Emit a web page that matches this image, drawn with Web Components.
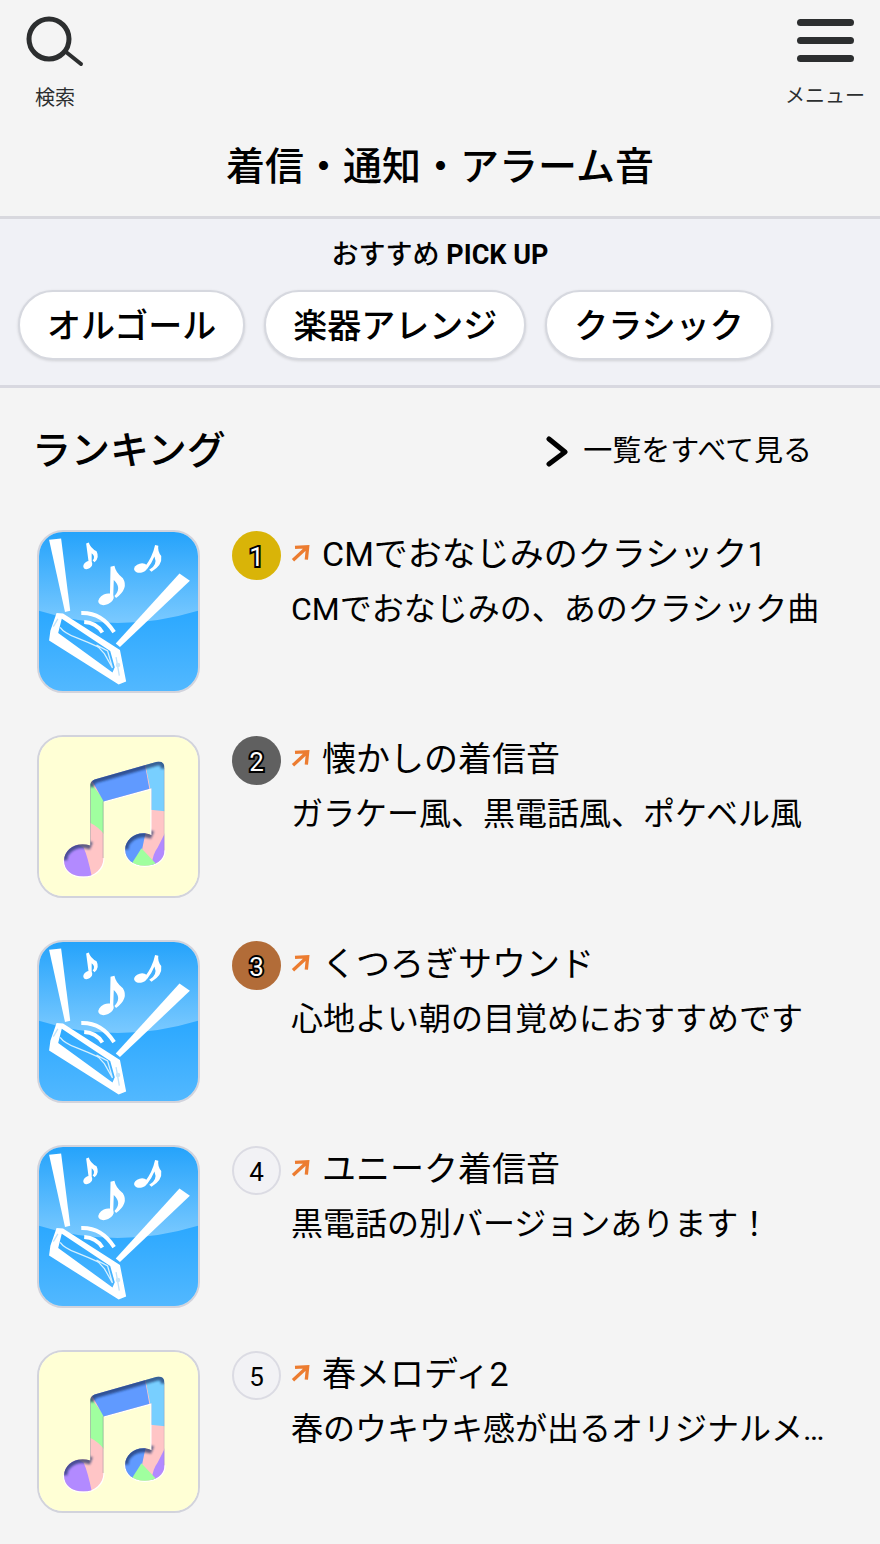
<!DOCTYPE html>
<html lang="ja">
<head>
<meta charset="utf-8">
<meta name="viewport" content="width=device-width, initial-scale=1">
<title>着信・通知・アラーム音</title>
<style>
  body {
    margin: 0;
    background: #f4f4f4;
    color: #000;
    font-family: Roboto, "Noto Sans CJK JP", sans-serif;
  }
</style>
</head>
<body>
<sound-page>
  <site-header>着信・通知・アラーム音</site-header>
  <pick-up>
    <span slot="heading">おすすめ <b>PICK UP</b></span>
    <pick-chip>オルゴール</pick-chip>
    <pick-chip>楽器アレンジ</pick-chip>
    <pick-chip>クラシック</pick-chip>
  </pick-up>
  <ranking-list>
    <span slot="heading">ランキング</span>
    <span slot="more">一覧をすべて見る</span>
    <rank-item rank="1" art="phone"><span slot="name">CMでおなじみのクラシック1</span>CMでおなじみの、あのクラシック曲</rank-item>
    <rank-item rank="2" art="note"><span slot="name">懐かしの着信音</span>ガラケー風、黒電話風、ポケベル風</rank-item>
    <rank-item rank="3" art="phone"><span slot="name">くつろぎサウンド</span>心地よい朝の目覚めにおすすめです</rank-item>
    <rank-item rank="4" art="phone"><span slot="name">ユニーク着信音</span>黒電話の別バージョンあります！</rank-item>
    <rank-item rank="5" art="note"><span slot="name">春メロディ2</span>春のウキウキ感が出るオリジナルメ…</rank-item>
  </ranking-list>
</sound-page>

<script>
const define = (name, html, setup) => {
  const template = document.createElement('template');
  template.innerHTML = html;
  customElements.define(name, class extends HTMLElement {
    constructor() {
      super();
      this.attachShadow({ mode: 'open' }).append(template.content.cloneNode(true));
    }
    connectedCallback() {
      if (setup) setup(this, this.shadowRoot);
    }
  });
};

define('sound-page', `
  <style>:host { display: block; }</style>
  <main><slot></slot></main>
`);

define('site-header', `
  <style>
    :host { display: block; border-bottom: 3px solid #d8d8de; }
    nav { display: flex; justify-content: space-between; padding: 16px 15px 0; }
    button {
      display: flex; flex-direction: column; align-items: center; gap: 16px;
      width: 80px; padding: 0; border: 0; background: none;
      color: #2c2e2f; font: 20px/24px Roboto, "Noto Sans CJK JP", sans-serif;
      white-space: nowrap; cursor: pointer;
    }
    svg { display: block; }
    h1 { margin: 0; padding: 28px 0 20px; text-align: center; font-size: 39px; line-height: 58px; font-weight: 500; }
  </style>
  <nav>
    <button type="button">
      <svg width="60" height="54" viewBox="0 0 60 54" fill="none" stroke="#2c2e2f">
        <circle cx="24" cy="23" r="20" stroke-width="5"/>
        <path d="M41 36L56 48" stroke-width="4" stroke-linecap="round"/>
      </svg>
      検索
    </button>
    <button type="button">
      <svg width="58" height="52" viewBox="0 0 58 52" fill="#2c2e2f">
        <rect x="1" y="3" width="57" height="7" rx="3.5"/>
        <rect x="1" y="21" width="57" height="7" rx="3.5"/>
        <rect x="1" y="39" width="57" height="7" rx="3.5"/>
      </svg>
      メニュー
    </button>
  </nav>
  <h1><slot></slot></h1>
`);

define('pick-up', `
  <style>
    :host { display: block; background: #f0f1f6; border-bottom: 3px solid #d8d8e0; padding: 16px 18px 25px; }
    h2 { margin: 0 0 15px; text-align: center; font-size: 27px; line-height: 40px; font-weight: 500; }
    .chips { display: flex; gap: 19px; }
  </style>
  <h2><slot name="heading"></slot></h2>
  <div class="chips"><slot></slot></div>
`);

define('pick-chip', `
  <style>
    :host { display: block; flex: none; }
    a {
      display: block; box-sizing: border-box; height: 70px; padding: 0 27px;
      border: 2px solid #d6d8df; border-radius: 35px; background: #fff;
      box-shadow: 0 1px 3px #0002;
      color: #000; font-size: 34px; line-height: 68px; font-weight: 500;
      text-decoration: none; white-space: nowrap;
    }
  </style>
  <a href="#"><slot></slot></a>
`);

define('ranking-list', `
  <style>
    :host { display: block; padding: 33px 37px; }
    header { display: flex; justify-content: space-between; align-items: center; padding-right: 31px; margin: 0 0 49px -5px; }
    h2 { margin: 0; font-size: 39px; line-height: 58px; font-weight: 500; }
    a { display: flex; align-items: center; gap: 14px; color: #000; font-size: 29px; line-height: 60px; text-decoration: none; white-space: nowrap; }
    .list { display: grid; gap: 42px; }
  </style>
  <header>
    <h2><slot name="heading"></slot></h2>
    <a href="#">
      <svg width="24" height="32" viewBox="0 0 24 32" fill="none" stroke="#000" stroke-width="5" stroke-linejoin="round" stroke-linecap="round" aria-hidden="true"><path d="M4 4L20 17L4 29"/></svg>
      <slot name="more"></slot>
    </a>
  </header>
  <div class="list" role="list"><slot></slot></div>
`);

const ART = {
  phone: `
    <svg viewBox="51 42 489 489" aria-hidden="true">
      <defs>
        <linearGradient id="sky" x1="0" y1="0" x2="0" y2="1">
          <stop offset="0" stop-color="#25a3fb"/><stop offset=".55" stop-color="#77c8ff"/><stop offset="1" stop-color="#77c8ff"/>
        </linearGradient>
        <linearGradient id="sea" x1="0" y1="0" x2="0" y2="1">
          <stop offset="0" stop-color="#2ba8ff"/><stop offset="1" stop-color="#52b8ff"/>
        </linearGradient>
      </defs>
      <path fill="url(#sky)" d="M51 42h489v489H51z"/>
      <path fill="url(#sea)" d="M51 284Q290 360 540 284V531H51z"/>
      <g fill="#fff">
        <path d="M82 66L119 62L147 284L131 288z"/>
        <path d="M483 170L515 192L300 396L287 385z"/>
        <ellipse cx="201" cy="144" rx="15" ry="11" transform="rotate(-35 201 144)"/>
        <path d="M196 77L204 74Q209 91 228 101Q238 121 222 135L216 130Q226 117 213 107L213 146L205 145z"/>
        <ellipse cx="257" cy="249" rx="25" ry="16" transform="rotate(-25 257 249)"/>
        <path d="M271 149L283 146Q287 168 309 184Q328 215 288 245L283 239Q307 214 281 190L279 248L269 246z"/>
        <ellipse cx="364" cy="153" rx="21" ry="14" transform="rotate(-15 364 153)"/>
        <path d="M408 82L418 84Q415 100 427 116Q431 145 397 164L390 158Q417 143 406 117Q397 139 384 155L375 151Q400 120 408 82z"/>
        <path fill-rule="evenodd" d="M105 291L125 293L300 405L319 502L296 511L82 376L86 346zM121 309L110 353L277 474L284 458L270 408z"/>
      </g>
      <g fill="none" stroke="#d5f0ff" stroke-width="4">
        <path d="M116 335Q128 352 164 366T236 397"/>
        <path d="M228 390L262 408L277 460L252 416z"/>
      </g>
      <path d="M95 333L109 309M288 427L298 484" stroke="#bfe3fb" stroke-width="4" fill="none"/>
      <circle cx="294" cy="451" r="7" fill="#c9e6f8"/>
      <g fill="none" stroke="#fff" stroke-width="12">
        <path d="M181 291Q244 289 282 350"/>
        <path d="M190 319Q227 321 246 351"/>
      </g>
    </svg>`,
  note: `
    <svg viewBox="51 42 489 489" aria-hidden="true">
      <defs>
        <clipPath id="shape">
          <path d="M209 188Q210 178 222 173L414 118Q436 115 437 137V390C437 420 409 438 376 438C340 438 316 417 316 388C316 353 359 326 397 344V200L249 240V414C249 447 222 471 188 471C151 471 128 451 128 421C128 389 166 361 209 376z"/>
        </clipPath>
        <filter id="soft"><feGaussianBlur stdDeviation="3"/></filter>
      </defs>
      <path fill="#ffffd5" d="M51 42h489v489H51z"/>
      <path fill="none" stroke="#fff" stroke-width="7" d="M249 240L397 200V344M128 421C128 451 151 471 188 471S249 447 249 414M316 388C316 417 340 438 376 438S437 420 437 390"/>
      <g clip-path="url(#shape)">
        <path fill="#ffc5c6" d="M100 100h360v400H100z"/>
        <path fill="#a0ff9f" d="M200 170L252 238V342Q234 318 205 304z"/>
        <path fill="#609aff" d="M205 160L374 112L391 205L251 243z"/>
        <path fill="#78cfff" d="M373 100H445V271L394 266V205z"/>
        <path fill="#b28aff" d="M120 350L188 382Q202 412 215 480H120zM440 334V438H397Q400 403 416 382z"/>
        <path fill="#609aff" d="M310 330L379 335L368 388L337 436H310z"/>
        <path fill="#a0ff9f" d="M366 384L410 431L389 445L335 433z"/>
        <g fill="none" stroke="#173268" stroke-opacity=".7" stroke-width="24" filter="url(#soft)">
          <path d="M207 195Q210 178 222 173L414 118Q436 115 438 139"/>
          <path d="M126 421C126 389 166 359 212 377M314 388C314 353 359 326 400 344"/>
        </g>
        <path fill="none" stroke="#65708d" stroke-opacity=".5" stroke-width="4" d="M209 188V376M437 137V390M249 240V414"/>
      </g>
    </svg>`
};

define('rank-item', `
  <style>
    :host { display: block; }
    a { display: flex; align-items: flex-start; color: #000; text-decoration: none; }
    .art { box-sizing: border-box; flex: none; width: 163px; height: 163px; overflow: hidden; border: 2px solid #d2d3dc; border-radius: 26px; }
    .art svg { display: block; width: 100%; height: 100%; }
    .rank {
      box-sizing: border-box; flex: none; width: 49px; height: 49px; margin: 1px 10px 0 32px;
      border: 2px solid #dbdbe3; border-radius: 50%; background: #f2f2f5;
      text-align: center; font-size: 26px; line-height: 48px;
    }
    :host([rank="1"]) .rank { background: #d9b408; }
    :host([rank="2"]) .rank { background: #606060; }
    :host([rank="3"]) .rank { background: #b26c38; }
    :host([rank="1"]) .rank, :host([rank="2"]) .rank, :host([rank="3"]) .rank {
      border-color: transparent;
      color: #fff; -webkit-text-stroke: 4px #000; paint-order: stroke fill;
    }
    .text { flex: 1; min-width: 0; white-space: nowrap; }
    .name { display: flex; align-items: center; gap: 11px; font-size: 34px; line-height: 48px; }
    .name svg { flex: none; }
    .about { margin-top: 6px; font-size: 32px; line-height: 50px; overflow: hidden; text-overflow: ellipsis; }
  </style>
  <a href="#">
    <div class="art"></div>
    <div class="rank"></div>
    <div class="text">
      <div class="name">
        <svg width="20" height="20" viewBox="216 84 60 60" fill="none" stroke="#ec7c30" stroke-width="10" aria-hidden="true"><path d="M222 133L264 94M228 94L266 92L262 131"/></svg>
        <slot name="name"></slot>
      </div>
      <div class="about"><slot></slot></div>
    </div>
  </a>
`, (host, root) => {
  host.setAttribute('role', 'listitem');
  root.querySelector('.art').innerHTML = ART[host.getAttribute('art')];
  root.querySelector('.rank').textContent = host.getAttribute('rank');
});
</script>
</body>
</html>
